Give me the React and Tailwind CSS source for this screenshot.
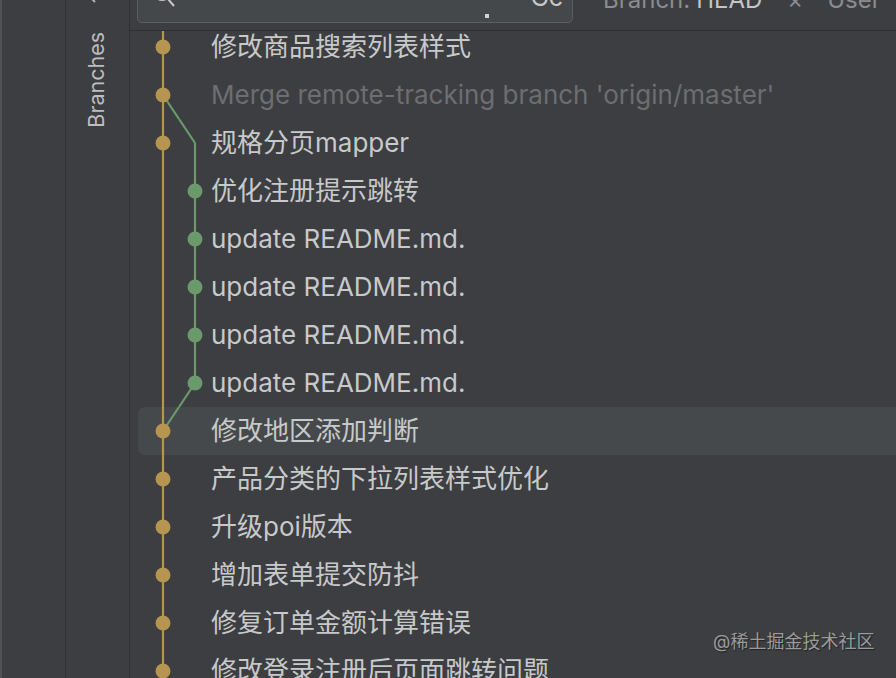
import React from "react";

const Y = "#b5954f";
const G = "#6a9a6c";

const rows = [
  { t: "修改商品搜索列表样式", dot: "y" },
  { t: "Merge remote-tracking branch 'origin/master'", dot: "y", dim: true, seg: "d1" },
  { t: "规格分页mapper", dot: "y", seg: "d2" },
  { t: "优化注册提示跳转", dot: "g", seg: "v" },
  { t: "update README.md.", dot: "g", seg: "v" },
  { t: "update README.md.", dot: "g", seg: "v" },
  { t: "update README.md.", dot: "g", seg: "v" },
  { t: "update README.md.", dot: "g", seg: "u1" },
  { t: "修改地区添加判断", dot: "y", seg: "u2", hl: true },
  { t: "产品分类的下拉列表样式优化", dot: "y" },
  { t: "升级poi版本", dot: "y" },
  { t: "增加表单提交防抖", dot: "y" },
  { t: "修复订单金额计算错误", dot: "y" },
  { t: "修改登录注册后页面跳转问题", dot: "y" },
];

function Graph({ seg, dot }) {
  return (
    <svg width="73" height="48" viewBox="0 0 73 48" className="shrink-0">
      <line x1="25" y1="0" x2="25" y2="48" stroke={Y} strokeWidth="2.2" />
      {seg === "d1" && <line x1="25" y1="24" x2="41" y2="48" stroke={G} strokeWidth="2.2" />}
      {seg === "d2" && (
        <>
          <line x1="41" y1="0" x2="57" y2="24" stroke={G} strokeWidth="2.2" />
          <line x1="57" y1="24" x2="57" y2="48" stroke={G} strokeWidth="2.2" />
        </>
      )}
      {seg === "v" && <line x1="57" y1="0" x2="57" y2="48" stroke={G} strokeWidth="2.2" />}
      {seg === "u1" && (
        <>
          <line x1="57" y1="0" x2="57" y2="24" stroke={G} strokeWidth="2.2" />
          <line x1="57" y1="24" x2="41" y2="48" stroke={G} strokeWidth="2.2" />
        </>
      )}
      {seg === "u2" && <line x1="41" y1="0" x2="25" y2="24" stroke={G} strokeWidth="2.2" />}
      {dot === "y" && <circle cx="25" cy="24" r="7.5" fill={Y} />}
      {dot === "g" && <circle cx="57" cy="24" r="7.5" fill={G} />}
    </svg>
  );
}

export default function App() {
  return (
    <div
      className="relative w-[896px] h-[678px] overflow-hidden bg-[#3c3e41] flex"
      style={{ fontFamily: 'Inter, "Noto Sans CJK SC", sans-serif' }}
    >
      {/* left tool strip */}
      <div className="w-[66px] shrink-0 border-r border-[#2f3133] flex">
        <div className="w-[2px] bg-[#505255]" />
      </div>
      {/* sidebar */}
      <div className="w-[64px] shrink-0 border-r border-[#2f3133] flex flex-col items-center">
        <svg width="14" height="8" viewBox="0 0 14 8" className="mt-[-3px] ml-[-8px]">
          <path d="M3 0 L8 5" stroke="#b8b9ba" strokeWidth="1.8" fill="none" />
        </svg>
        <div className="mt-[27px] h-[96px] w-[24px] ml-[-2px] flex items-center justify-center">
          <span className="-rotate-90 whitespace-nowrap text-[21.5px] leading-none text-[#bcbdbe]">Branches</span>
        </div>
      </div>
      {/* main */}
      <div className="flex-1 flex flex-col min-w-0">
        <div className="h-[31px] shrink-0 border-b border-[#2d2f31] flex items-start">
          <div className="ml-[7px] mt-[-14px] w-[436px] h-[37px] shrink-0 rounded-[5px] border border-[#5c5f62] bg-[#45484a] flex items-start">
            <svg width="30" height="24" viewBox="0 0 30 24" className="ml-[13px] mt-[0px]">
              <circle cx="11" cy="5" r="8" stroke="#c8c8c8" strokeWidth="2" fill="none" />
              <path d="M17 12 L23 19" stroke="#c8c8c8" strokeWidth="2" />
            </svg>
            <div className="ml-auto mt-[27px] w-[4px] h-[4px] bg-[#d0d0d0] mr-[41px]" />
            <span className="mt-[-2px] text-[25px] leading-none text-[#c8c8c8] mr-[9px]">Cc</span>
          </div>
          <div className="ml-[30px] mt-[-12px] flex items-start text-[24px] leading-none whitespace-nowrap">
            <span className="text-[#8a8c8f]">Branch:</span>
            <span className="ml-[6px] text-[#c4c5c6]">HEAD</span>
            <span className="ml-[25px] text-[#8a8c8f]">×</span>
            <span className="ml-[24px] text-[#8a8c8f]">User</span>
          </div>
        </div>
        <div className="flex-1 overflow-hidden">
          <div className="mt-[-8px]">
            {rows.map((r, i) => (
              <div key={i} className="h-[48px] pl-2 flex">
                <div
                  className={
                    r.hl
                      ? "flex-1 flex items-center rounded-l-[7px] bg-[#46494c]"
                      : "flex-1 flex items-center"
                  }
                >
                  <Graph seg={r.seg} dot={r.dot} />
                  <span
                    className={
                      r.dim
                        ? "text-[26px] leading-none whitespace-nowrap text-[#6c6e71]"
                        : "text-[26px] leading-none whitespace-nowrap text-[#c8c9ca]"
                    }
                  >
                    {r.t}
                  </span>
                </div>
              </div>
            ))}
          </div>
        </div>
      </div>
      <div className="absolute left-[713px] top-[633px] text-[18px] leading-none text-[#9b9b9b] [text-shadow:1px_1px_1px_#222]">
        @稀土掘金技术社区
      </div>
    </div>
  );
}
